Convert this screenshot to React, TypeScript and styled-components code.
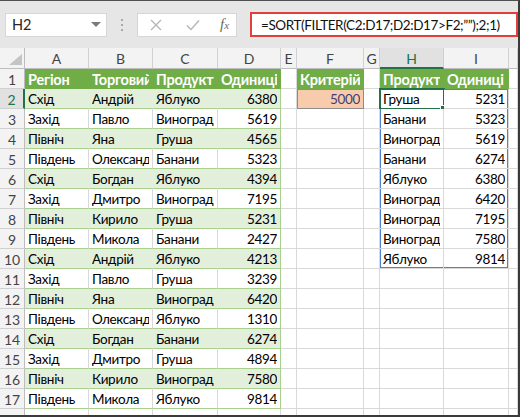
import React from 'react';
import styled, { createGlobalStyle, css } from 'styled-components';

const GlobalStyle = createGlobalStyle`
  html, body {
    margin: 0;
    padding: 0;
    background: #ffffff;
  }
  body {
    font-family: Lato, "Noto Sans", sans-serif;
  }
`;

type Row = [string, string, string, number];

const data: Row[] = [
  ['Схід', 'Андрій', 'Яблуко', 6380],
  ['Захід', 'Павло', 'Виноград', 5619],
  ['Північ', 'Яна', 'Груша', 4565],
  ['Південь', 'Олександр', 'Банани', 5323],
  ['Схід', 'Богдан', 'Яблуко', 4394],
  ['Захід', 'Дмитро', 'Виноград', 7195],
  ['Північ', 'Кирило', 'Груша', 5231],
  ['Південь', 'Микола', 'Банани', 2427],
  ['Схід', 'Андрій', 'Яблуко', 4213],
  ['Захід', 'Павло', 'Груша', 3239],
  ['Північ', 'Яна', 'Виноград', 6420],
  ['Південь', 'Олександр', 'Яблуко', 1310],
  ['Схід', 'Богдан', 'Банани', 6274],
  ['Захід', 'Дмитро', 'Груша', 4894],
  ['Північ', 'Кирило', 'Виноград', 7580],
  ['Південь', 'Микола', 'Яблуко', 9814],
];

const headers = ['Регіон', 'Торговий представник', 'Продукт', 'Одиниці'];
const criterion = 5000;

// =SORT(FILTER(C2:D17;D2:D17>F2;"");2;1)
const spill = data
  .filter((r) => r[3] > criterion)
  .map((r) => [r[2], r[3]] as [string, number])
  .sort((a, b) => a[1] - b[1]);

const letters = ['A', 'B', 'C', 'D', 'E', 'F', 'G', 'H', 'I', ''];
const ROW_COUNT = 18;

const Frame = styled.div`
  width: 520px;
  height: 417px;
  box-sizing: border-box;
  border-top: 1px solid #505050;
  border-right: 2px solid #3a3a3a;
  border-bottom: 2px solid #3a3a3a;
  display: flex;
  flex-direction: column;
  overflow: hidden;
  background: #fff;
`;

const Toolbar = styled.div`
  flex: 0 0 47px;
  display: flex;
  align-items: center;
  background: #e6e6e6;
  padding-left: 5px;
`;

const NameBox = styled.div`
  width: 102px;
  height: 24px;
  box-sizing: border-box;
  background: #fff;
  border: 1px solid #d6d6d6;
  display: flex;
  align-items: center;
  justify-content: space-between;
  padding: 0 5px 0 6px;
  font-size: 14.5px;
  color: #262626;
`;

const Caret = styled.span`
  width: 0;
  height: 0;
  border-left: 5px solid transparent;
  border-right: 5px solid transparent;
  border-top: 5px solid #7a7a7a;
`;

const Grip = styled.div`
  width: 30px;
  display: flex;
  flex-direction: column;
  align-items: center;
  gap: 3px;

  span {
    width: 2px;
    height: 2px;
    background: #a8a8a8;
  }
`;

const FuncBox = styled.div`
  width: 100px;
  height: 24px;
  box-sizing: border-box;
  background: #fff;
  border: 1px solid #d6d6d6;
  display: flex;
  align-items: center;
  padding-left: 11px;
  gap: 22px;
  color: #b7b7b7;
`;

const Fx = styled.span`
  margin-left: -3px;
  font-family: "Liberation Serif", serif;
  font-style: italic;
  font-size: 15px;
  color: #6a6a6a;

  sub {
    font-size: 11px;
    vertical-align: baseline;
  }
`;

const FormulaBar = styled.div`
  flex: 1;
  margin-left: 13px;
  height: 25px;
  box-sizing: border-box;
  border: 2px solid #e0403a;
  background: #fff;
  display: flex;
  align-items: center;
  padding-left: 9px;
  font-size: 13.5px;
  letter-spacing: -0.4px;
  color: #111;
  white-space: nowrap;
  overflow: hidden;
`;

const Sheet = styled.div`
  flex: 1;
  display: grid;
  grid-template-columns: 25px 64px 64px 65px 63px 16px 67px 16px 64px 65px 1fr;
  grid-template-rows: 21px;
  grid-auto-rows: 20px;
  overflow: hidden;
  font-size: 13.5px;
  letter-spacing: -0.3px;
`;

const cellBase = css`
  position: relative;
  box-sizing: border-box;
  display: flex;
  align-items: center;
  min-width: 0;
  padding: 1px 3px 0;
  border-right: 1px solid #d9d9d9;
  border-bottom: 1px solid #d9d9d9;
  background: #fff;
  color: #000;
`;

const Text = styled.span<{ $num?: boolean }>`
  flex: 1;
  overflow: hidden;
  white-space: nowrap;
  text-align: ${({ $num }) => ($num ? 'right' : 'left')};
`;

const Corner = styled.div`
  ${cellBase};
  background: #f3f3f3;
  border-right-color: #bdbdbd;
  border-bottom-color: #bdbdbd;

  &::after {
    content: '';
    position: absolute;
    right: 2px;
    bottom: 3px;
    width: 0;
    height: 0;
    border-left: 13px solid transparent;
    border-bottom: 11px solid #c4c4c4;
  }
`;

const headText = css`
  justify-content: center;
  font-size: 14px;
  letter-spacing: 0;
`;

const ColHead = styled.div<{ $active?: boolean }>`
  ${cellBase};
  ${headText};
  background: ${({ $active }) => ($active ? '#e1e1e1' : '#f3f3f3')};
  border-right-color: #d0d0d0;
  border-bottom: ${({ $active }) =>
    $active ? '2px solid #217346' : '1px solid #bdbdbd'};
  color: ${({ $active }) => ($active ? '#217346' : '#444')};
`;

const RowHead = styled.div<{ $active?: boolean }>`
  ${cellBase};
  ${headText};
  padding: 1px 0 0;
  background: ${({ $active }) => ($active ? '#e1e1e1' : '#f3f3f3')};
  border-right: ${({ $active }) =>
    $active ? '2px solid #217346' : '1px solid #bdbdbd'};
  border-bottom-color: #d0d0d0;
  color: ${({ $active }) => ($active ? '#217346' : '#444')};
`;

const HeadCell = styled.div`
  ${cellBase};
  background: #70ad47;
  border-right-color: #70ad47;
  border-bottom-color: #70ad47;
  color: #fff;
  font-weight: 700;
  font-size: 14.5px;
  letter-spacing: -0.2px;
`;

const BodyCell = styled.div<{ $band?: boolean; $last?: boolean }>`
  ${cellBase};
  background: ${({ $band }) => ($band ? '#e2efda' : '#fff')};
  border-bottom-color: #a9d08e;
  border-right-color: ${({ $band, $last }) =>
    $last ? '#a9d08e' : $band ? '#e2efda' : '#d9d9d9'};
`;

const InputCell = styled.div`
  ${cellBase};
  background: #f8cbad;
  border-right-color: #8c8c8c;
  border-bottom-color: #8c8c8c;
  box-shadow: inset 1px 1px 0 #8c8c8c;
  color: #3f3f76;
`;

type Edges = { top?: boolean; right?: boolean; bottom?: boolean; left?: boolean };

const SPILL = '#4f81d4';

const SpillCell = styled.div<{ $edges: Edges }>`
  ${cellBase};
  box-shadow: ${({ $edges }) =>
    [
      $edges.top && `inset 0 1px 0 ${SPILL}`,
      $edges.bottom && `inset 0 -1px 0 ${SPILL}`,
      $edges.left && `inset 1px 0 0 ${SPILL}`,
      $edges.right && `inset -1px 0 0 ${SPILL}`,
    ]
      .filter(Boolean)
      .join(', ') || 'none'};
`;

const EmptyCell = styled.div`
  ${cellBase};
`;

const Selection = styled.div`
  position: absolute;
  top: -1px;
  left: -1px;
  right: -2px;
  bottom: -2px;
  border: 2px solid #217346;
  pointer-events: none;

  &::after {
    content: '';
    position: absolute;
    right: -4px;
    bottom: -4px;
    width: 5px;
    height: 5px;
    background: #217346;
    border: 1px solid #fff;
  }
`;

function renderCell(row: number, col: number) {
  const key = `${row}-${col}`;

  // A..D: source table
  if (col <= 3) {
    if (row === 1)
      return (
        <HeadCell key={key}>
          <Text>{headers[col]}</Text>
        </HeadCell>
      );
    const rec = data[row - 2];
    if (rec) {
      const num = col === 3;
      return (
        <BodyCell key={key} $band={row % 2 === 0} $last={num}>
          <Text $num={num}>{rec[col]}</Text>
        </BodyCell>
      );
    }
  }

  // F: criterion
  if (col === 5) {
    if (row === 1)
      return (
        <HeadCell key={key}>
          <Text>Критерій</Text>
        </HeadCell>
      );
    if (row === 2)
      return (
        <InputCell key={key}>
          <Text $num>{criterion}</Text>
        </InputCell>
      );
  }

  // H..I: result
  if (col === 7 || col === 8) {
    if (row === 1)
      return (
        <HeadCell key={key}>
          <Text>{col === 7 ? 'Продукт' : 'Одиниці'}</Text>
        </HeadCell>
      );
    const item = spill[row - 2];
    if (item) {
      const edges: Edges = {
        top: row === 2,
        bottom: row === spill.length + 1,
        left: col === 7,
        right: col === 8,
      };
      return (
        <SpillCell key={key} $edges={edges}>
          <Text $num={col === 8}>{col === 7 ? item[0] : item[1]}</Text>
          {row === 2 && col === 7 && <Selection />}
        </SpillCell>
      );
    }
  }

  return <EmptyCell key={key} />;
}

export default function App() {
  const rows = Array.from({ length: ROW_COUNT }, (_, i) => i + 1);

  return (
    <>
      <GlobalStyle />
      <Frame>
        <Toolbar>
          <NameBox>
            H2
            <Caret />
          </NameBox>
          <Grip>
            <span />
            <span />
            <span />
          </Grip>
          <FuncBox>
            <svg width="14" height="14" viewBox="0 0 14 14">
              <path d="M2 2 L12 12 M12 2 L2 12" stroke="currentColor" strokeWidth="1.4" />
            </svg>
            <svg width="16" height="14" viewBox="0 0 16 14">
              <path d="M2 7.5 L6 11.5 L14 2.5" stroke="currentColor" strokeWidth="1.5" fill="none" />
            </svg>
            <Fx>
              f<sub>x</sub>
            </Fx>
          </FuncBox>
          <FormulaBar>=SORT(FILTER(C2:D17;D2:D17&gt;F2;””);2;1)</FormulaBar>
        </Toolbar>

        <Sheet>
          <Corner />
          {letters.map((l) => (
            <ColHead key={l || 'J'} $active={l === 'H'}>
              {l}
            </ColHead>
          ))}
          {rows.map((r) => (
            <React.Fragment key={r}>
              <RowHead $active={r === 2}>{r}</RowHead>
              {letters.map((_, c) => renderCell(r, c))}
            </React.Fragment>
          ))}
        </Sheet>
      </Frame>
    </>
  );
}
